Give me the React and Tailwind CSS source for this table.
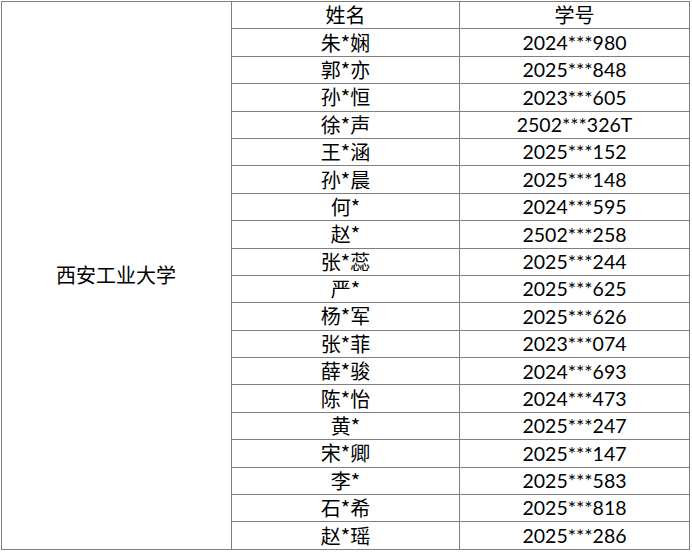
const rows = [
  ['朱*娴', '2024***980'],
  ['郭*亦', '2025***848'],
  ['孙*恒', '2023***605'],
  ['徐*声', '2502***326T'],
  ['王*涵', '2025***152'],
  ['孙*晨', '2025***148'],
  ['何*', '2024***595'],
  ['赵*', '2502***258'],
  ['张*蕊', '2025***244'],
  ['严*', '2025***625'],
  ['杨*军', '2025***626'],
  ['张*菲', '2023***074'],
  ['薛*骏', '2024***693'],
  ['陈*怡', '2024***473'],
  ['黄*', '2025***247'],
  ['宋*卿', '2025***147'],
  ['李*', '2025***583'],
  ['石*希', '2025***818'],
  ['赵*瑶', '2025***286'],
];

const cjk = "font-['Noto_Sans_CJK_SC',sans-serif]";
const num = "font-['Lato','Noto_Sans_CJK_SC',sans-serif]";

export default function App() {
  return (
    <div className="w-[692px] h-[553px] bg-white pt-px pl-px">
      <table className="border-collapse w-[689px] text-black">
        <tbody>
          <tr className="h-[27.4px]">
            <td
              rowSpan={20}
              className={`w-[230px] border border-[#7f7f7f] pl-[54px] text-[20px] ${cjk}`}
            >
              西安工业大学
            </td>
            <td className={`w-[228px] border border-[#7f7f7f] text-center text-[20px] leading-none ${cjk}`}>
              姓名
            </td>
            <td className={`border border-[#7f7f7f] text-center text-[20px] leading-none ${cjk}`}>
              学号
            </td>
          </tr>
          {rows.map(([name, id]) => (
            <tr key={id + name} className="h-[27.4px]">
              <td className={`border border-[#7f7f7f] text-center text-[20px] leading-none ${cjk}`}>
                {name}
              </td>
              <td className={`border border-[#7f7f7f] text-center text-[19.5px] leading-none ${num}`}>
                {id}
              </td>
            </tr>
          ))}
        </tbody>
      </table>
    </div>
  );
}
